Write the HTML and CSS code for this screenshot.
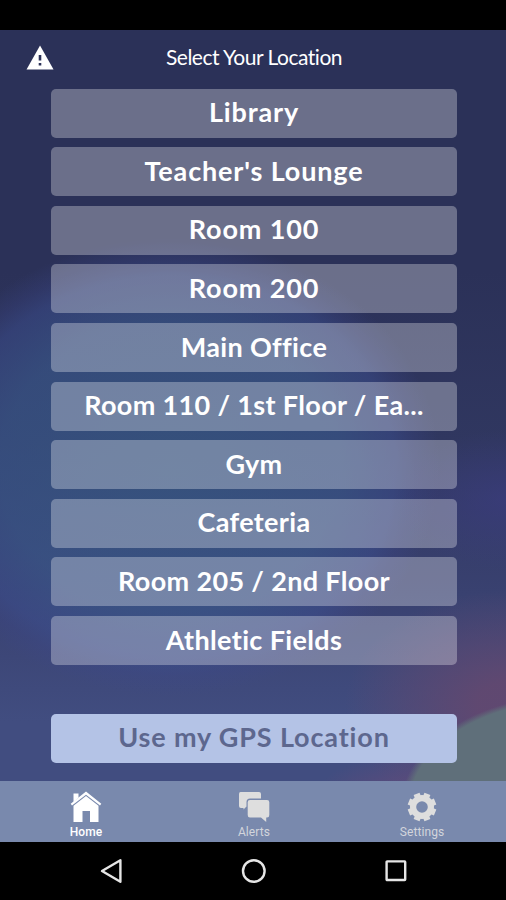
FILE: index.html
```html
<!DOCTYPE html>
<html lang="en">
<head>
  <meta charset="UTF-8" />
  <meta name="viewport" content="width=device-width, initial-scale=1.0" />
  <title>Select Your Location</title>
  <link rel="stylesheet" href="styles.css">
</head>
<body>
  <div class="status-bar"></div>

  <div class="screen">
    <div class="header">
      <svg class="warning" viewBox="0 0 28 25" width="28" height="25">
        <path d="M14 0.5 L27.5 24.5 H0.5 Z" fill="#fff"/>
        <path d="M12.7 10h2.6v5.6h-2.6zM12.7 18h2.6v2.6h-2.6z" fill="#2b3158"/>
      </svg>
      <h1>Select Your Location</h1>
    </div>

    <div class="locations">
      <button class="wide">Library</button>
      <button class="wide">Teacher's Lounge</button>
      <button class="wide">Room 100</button>
      <button class="wide">Room 200</button>
      <button>Main Office</button>
      <button>Room 110 / 1st Floor / Ea...</button>
      <button>Gym</button>
      <button>Cafeteria</button>
      <button>Room 205 / 2nd Floor</button>
      <button>Athletic Fields</button>
      <button class="gps wide">Use my GPS Location</button>
    </div>
  </div>

  <div class="tabs">
    <div class="tab active">
      <svg viewBox="0 0 32 32" width="32" height="32" fill="#fff">
        <path d="M3.5 2.5h5v4.2l-5 4.4z"/>
        <path d="M16 0.5 L31.3 12.7 L30 14.6 L16 3.7 L2 14.6 L0.7 12.7 Z"/>
        <path d="M16 5 L28.5 14.8 V31 H20 V20 H12.5 V31 H3.5 V14.8 Z"/>
      </svg>
      <span>Home</span>
    </div>
    <div class="tab">
      <svg viewBox="0 0 32 32" width="32" height="32" fill="#dedede">
        <path d="M2.5 1 H21 Q23 1 23 3 V7.5 H12 Q8.5 7.5 8.5 11 V15.5 L5.5 18.5 V17 H3 Q1 17 1 15 V3 Q1 1 2.5 1 Z"/>
        <path d="M12 9 H29 Q31.3 9 31.3 11.3 V24 Q31.3 26.5 29 26.5 H28.2 V31 L23 26.5 H12 Q9.7 26.5 9.7 24 V11.3 Q9.7 9 12 9 Z"/>
      </svg>
      <span>Alerts</span>
    </div>
    <div class="tab">
      <svg viewBox="0 0 32 32" width="32" height="32" fill="none" stroke="#dedede">
        <circle cx="16" cy="16" r="8.9" stroke-width="6.2"/>
        <g stroke-width="6.4" transform="rotate(22.5 16 16)">
          <path d="M16 1.8V8M16 24v6.2M1.8 16H8M24 16h6.2"/>
          <path d="M16 1.8V8M16 24v6.2M1.8 16H8M24 16h6.2" transform="rotate(45 16 16)"/>
        </g>
      </svg>
      <span>Settings</span>
    </div>
  </div>

  <div class="nav-bar">
    <svg viewBox="0 0 26 26" width="26" height="26"><path d="M22.4 2.2 V23.8 L4 13 Z"/></svg>
    <svg viewBox="0 0 26 26" width="26" height="26"><circle cx="12.8" cy="13" r="10.8"/></svg>
    <svg viewBox="0 0 26 26" width="26" height="26"><rect x="3.6" y="3.4" width="18.6" height="18.6" rx="0.6"/></svg>
  </div>
</body>
</html>
```
FILE: styles.css
```css
* {
  box-sizing: border-box;
}
body {
  margin: 0;
  height: 900px;
  display: flex;
  flex-direction: column;
  background: #000;
  color: #fff;
  font-family: Lato, "Open Sans", sans-serif;
  overflow: hidden;
}
.status-bar {
  height: 29.5px;
}
.screen {
  height: 751px;
  background:
    radial-gradient(ellipse 170px 112px at 572px 778px, #5f6f7a 96%, rgba(95, 111, 122, 0) 101%),
    radial-gradient(ellipse 100px 45px at 415px 768px, rgba(105, 74, 122, 0.75) 10%, rgba(105, 74, 122, 0) 100%),
    radial-gradient(ellipse 165px 115px at 510px 675px, rgba(97, 72, 112, 0.95) 20%, rgba(97, 72, 112, 0) 100%),
    radial-gradient(ellipse 110px 70px at 506px 470px, rgba(60, 60, 130, 0.6) 0%, rgba(60, 60, 130, 0) 100%),
    radial-gradient(ellipse 262px 222px at 170px 437px, rgba(56, 94, 138, 0.65) 0%, rgba(58, 90, 142, 0.6) 65%, rgba(60, 80, 148, 0.45) 86%, rgba(60, 72, 142, 0.25) 94%, rgba(60, 70, 140, 0) 103%),
    linear-gradient(#2b3158 0%, #2b3158 32%, #303760 55%, #394170 75%, #414d80 92%, #414d80 100%);
}
.header {
  height: 59.2px;
  display: grid;
  grid-template-columns: 54px 1fr 52px;
  align-items: center;
}
.warning {
  margin: -4px 0 0 26px;
}
h1 {
  margin: -6px 0 0;
  text-align: center;
  font-size: 21px;
  font-weight: 400;
  letter-spacing: -0.5px;
}
.locations {
  display: flex;
  flex-direction: column;
  gap: 9.6px;
  padding: 0 49px 0 51px;
}
.locations button {
  height: 49px;
  padding: 0 20px 3px;
  border: 0;
  border-radius: 5px;
  background: rgba(255, 255, 255, 0.3);
  color: #fff;
  font-family: inherit;
  font-size: 27px;
  font-weight: 700;
  letter-spacing: 0.35px;
  white-space: nowrap;
}
.locations .wide {
  letter-spacing: 0.85px;
}
.locations .gps {
  margin-top: 39.2px;
  background: #b4c3e6;
  color: #5d678e;
}
.tabs {
  height: 61.5px;
  display: flex;
  padding-left: 2px;
  background: #7989ad;
}
.tab {
  flex: 1;
  display: flex;
  flex-direction: column;
  align-items: center;
  padding-top: 10px;
  color: #d2d5dc;
  font-family: Roboto, sans-serif;
  font-size: 12px;
  line-height: 14px;
}
.tab span {
  margin-top: 2px;
  letter-spacing: 0.1px;
}
.tab.active {
  color: #fff;
  font-weight: 500;
}
.nav-bar {
  height: 58px;
  display: flex;
  justify-content: space-between;
  align-items: center;
  padding: 0 97px 0 98px;
}
.nav-bar svg {
  fill: none;
  stroke: #e6e6e6;
  stroke-width: 2.4;
  stroke-linejoin: round;
}
```
